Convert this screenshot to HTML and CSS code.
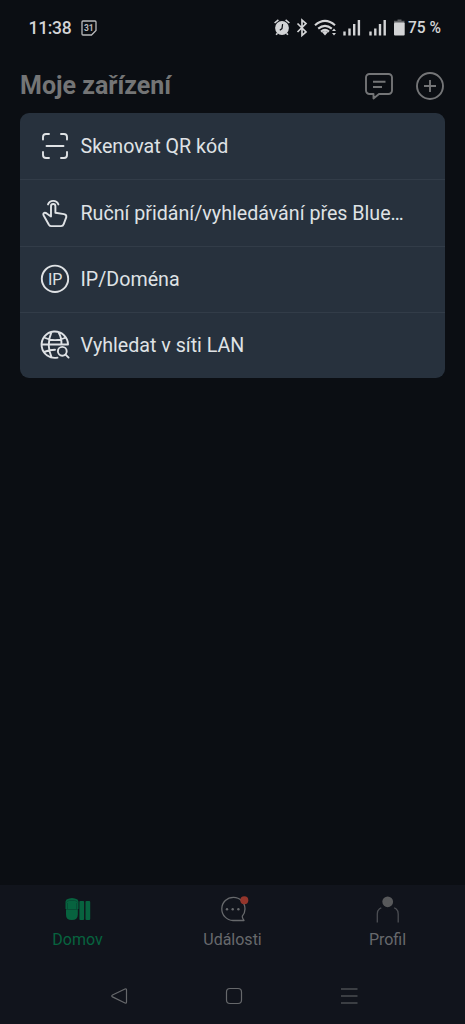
FILE: index.html
```html
<!DOCTYPE html>
<html lang="cs">
<head>
<meta charset="utf-8">
<title>Moje zařízení</title>
<link rel="stylesheet" href="styles.css">
</head>
<body>
<div class="screen">
  <div class="status">
    <span class="clock">11:38</span>
    <svg class="calendar" width="16" height="16" viewBox="0 0 16 16"><path d="M2 1h12a1 1 0 0 1 1 1v8.500L10.500 15H2a1 1 0 0 1-1-1V2a1 1 0 0 1 1-1z" fill="none" stroke="currentColor" stroke-width="1.300"/><text x="7.800" y="10.800" class="calendar-day">31</text></svg>
    <svg class="indicators" width="133" height="20" viewBox="0 0 133 20" fill="currentColor">
      <circle cx="8" cy="10" r="6.900"/>
      <path d="M.6 5 4.400 1.800M15.400 5 11.600 1.800M3.500 15.200l-1.400 1.600M12.500 15.200l1.400 1.600" stroke="currentColor" stroke-width="1.600"/>
      <path d="M8.600 6.200 8 10.600l-2.200 1.600" fill="none" stroke="#0b0e13" stroke-width="1.200"/>
      <path d="m23.500 5.500 8.500 8.500-4 3.500V2l4 3.500-8.500 8.500" fill="none" stroke="currentColor" stroke-width="1.700"/>
      <path d="M41 7.200q10-8.700 20 0M44.200 10.600q6.800-5.600 13.600 0M47 13.600q4-3.300 8 0" fill="none" stroke="currentColor" stroke-width="2.100"/>
      <path d="m48 14 3 3.500 3-3.500q-3-2-6 0zM58 12.900l2-2.500 2 2.500zM58 15l2 2.500 2-2.500z"/>
      <path d="M69.300 13.500h2.400v4h-2.400zM74.300 10.500h2.400v7h-2.400zM79 6h2.400v11.500h-2.400zM83.700 2h2.400v15.500h-2.400zM95.300 13.500h2.400v4h-2.400zM100.100 10.500h2.400v7h-2.400zM104.800 6h2.400v11.500h-2.400zM109.500 2h2.400v15.500h-2.400z"/>
      <path d="M123.500 1.500h4v1.200h3V5h-10.500V2.700h3.500z" opacity=".42"/>
      <rect x="120" y="4.600" width="10.700" height="13" rx="1"/>
    </svg>
    <span class="battery">75 %</span>
  </div>

  <header class="header">
    <h1>Moje zařízení</h1>
    <svg class="message" width="30" height="30" viewBox="0 0 30 30"><path d="M5.500 2h19a3.500 3.500 0 0 1 3.500 3.500v13a3.500 3.500 0 0 1-3.500 3.500H15l-5.500 4.500V22h-4A3.500 3.500 0 0 1 2 18.500v-13A3.500 3.500 0 0 1 5.500 2zM9 9.700h12.500M9 15h9"/></svg>
    <svg width="30" height="30" viewBox="0 0 30 30"><circle cx="15" cy="15" r="13"/><path d="M9 15h12M15 9v12"/></svg>
  </header>

  <main>
    <ul class="menu">
      <li>
        <svg width="30" height="30" viewBox="0 0 30 30"><path d="M3 8.500V6q0-3 3-3h3M21 3h3q3 0 3 3v2.500M27 21v3q0 3-3 3h-3M9 27H6q-3 0-3-3v-3M6.500 15h17"/></svg>
        <span>Skenovat QR kód</span>
      </li>
      <li>
        <svg width="30" height="30" viewBox="0 0 30 30"><path d="M8 6.400a5.600 5.600 0 0 1 10.400 0M11 18.500V8.200a2.200 2.200 0 0 1 4.400 0v6.600l8.600 1.300q2.700.5 2.300 3l-2.600 7q-.7 2-2.700 2h-9.600q-1.600 0-2.500-1.400l-5.200-9.200q-1-2 .5-2.600 1.100-.4 2.500.5z"/></svg>
        <span>Ruční přidání/vyhledávání přes Blue…</span>
      </li>
      <li>
        <svg width="30" height="30" viewBox="0 0 30 30"><circle cx="15" cy="14.800" r="13.200"/><text x="15.200" y="20.500" class="ip">IP</text></svg>
        <span>IP/Doména</span>
      </li>
      <li>
        <svg width="30" height="30" viewBox="0 0 30 30"><path d="M17.500 27.600A13.200 13.200 0 1 1 28 14.500M4 7.500q11 5.200 22 0M4 22q5.500-2.200 11-2.200M2 14.500h26M11.500 2.200q-5.500 12.300 0 25M18.500 2.200q3.300 5.800 3 12.300"/><circle cx="22.300" cy="21.300" r="4.400"/><path d="m25.600 24.600 3 3"/></svg>
        <span>Vyhledat v síti LAN</span>
      </li>
    </ul>
  </main>

  <footer>
    <nav class="tabs">
      <a class="active">
        <svg width="30" height="28" viewBox="0 0 30 28" fill="currentColor"><path d="M3.500 3.500Q9 .3 14.500 3.500l1 2v7.500h-.7v5.500q0 5.500-6 5.500T3 18.500V13h-.5V5.500z"/><rect x="16.400" y="5" width="4.700" height="19" rx="1"/><rect x="22.500" y="5" width="4.700" height="19" rx="1"/><path d="M3.500 6.500q1-2 3-2h5q2 0 3 2M4.500 7v6M13.600 7v6M3 13.500h12" fill="none" stroke="#084c34" stroke-width=".9"/></svg>
        <span>Domov</span>
      </a>
      <a>
        <svg width="30" height="28" viewBox="0 0 30 28"><path d="M15 24.500a11.600 11.600 0 1 1 12-11.600q0 4-2.700 7.200-.3 2 1.700 4.400z" fill="none" stroke="currentColor" stroke-width="1.300" stroke-linejoin="round"/><g fill="currentColor"><circle cx="9" cy="13.300" r="1.200"/><circle cx="14.700" cy="13.300" r="1.200"/><circle cx="20.400" cy="13.300" r="1.200"/></g><circle cx="26.300" cy="4.200" r="4" fill="#94352b"/></svg>
        <span>Události</span>
      </a>
      <a>
        <svg width="30" height="28" viewBox="0 0 30 28"><circle cx="14.700" cy="5.800" r="5.400" fill="#58595b"/><path d="M4.300 26.500V18q0-3.500 2-5l2-1.200M25.200 26.500V18q0-3.500-2-5l-2-1.200" fill="none" stroke="#4c4e53" stroke-width="1.300"/></svg>
        <span>Profil</span>
      </a>
    </nav>
    <div class="system">
      <svg width="18" height="18" viewBox="0 0 18 18"><path d="M15 2 2.500 8q-1.500.9 0 1.900L15 16q1.500.5 1.500-1V3q0-1.500-1.500-1z"/></svg>
      <svg width="18" height="18" viewBox="0 0 18 18"><rect x="1.500" y="1.500" width="15" height="15" rx="3.500"/></svg>
      <svg width="18" height="18" viewBox="0 0 18 18"><path d="M1 2h16.500M1 9h16.500M1 16h16.500"/></svg>
    </div>
  </footer>
</div>
</body>
</html>
```

FILE: styles.css
```css
* { box-sizing: border-box; }
body {
  margin: 0;
  background: #0b0e13;
  font-family: Roboto, "Noto Sans", sans-serif;
}
svg { display: block; flex: none; overflow: visible; }
.screen { height: 1024px; display: flex; flex-direction: column; }
.status {
  height: 56px;
  padding: 0 24px 0 28.500px;
  display: flex;
  align-items: center;
  color: #d3d4d6;
  font-weight: 500;
}
.clock { width: 52.500px; font-size: 17.500px; letter-spacing: -.3px; }
.calendar { color: #b9babc; }
.calendar-day { font-size: 8.500px; font-weight: 700; fill: currentColor; text-anchor: middle; }
.indicators { margin-left: auto; color: #d3d4d6; }
.battery { margin-left: 1px; width: 33px; font-size: 15.600px; white-space: nowrap; }
.header {
  height: 57px;
  padding: 2px 20px 0;
  display: flex;
  align-items: center;
  gap: 21px;
}
.header h1 {
  flex: 1;
  margin: 0;
  color: #747576;
  font-size: 25px;
  font-weight: 700;
}
.header svg { fill: none; stroke: #747577; stroke-width: 1.900; stroke-linejoin: round; }
.header .message { margin-top: 2px; }
main { flex: 1; padding: 0 20px; }
.menu {
  margin: 0;
  padding: 0;
  height: 265px;
  display: grid;
  grid-template-rows: repeat(4, 1fr);
  border-radius: 9px;
  background: #27313d;
  list-style: none;
}
.menu li {
  min-width: 0;
  padding: 0 35px 0 20px;
  display: flex;
  align-items: center;
  gap: 10.500px;
  color: #dfe2e5;
  font-size: 19.650px;
}
.menu li + li { border-top: 1px solid #323c48; }
.menu span { padding-top: 1px; white-space: nowrap; }
.menu svg { fill: none; stroke: #dfe2e5; stroke-width: 1.900; stroke-linecap: round; stroke-linejoin: round; }
.menu .ip { fill: #dfe2e5; stroke: none; font-size: 16px; text-anchor: middle; }
footer { height: 139px; background: #11141c; }
.tabs { height: 82px; display: grid; grid-template-columns: repeat(3, 1fr); }
.tabs a {
  padding-top: 11px;
  display: flex;
  flex-direction: column;
  align-items: center;
  gap: 6px;
  color: #67696c;
  font-size: 16px;
  line-height: 20px;
}
.tabs .active { color: #07633f; }
.system { height: 57px; padding-left: 3px; display: flex; justify-content: center; align-items: center; gap: 97px; }
.system svg { fill: none; stroke: #66686b; stroke-width: 1.200; }
```
